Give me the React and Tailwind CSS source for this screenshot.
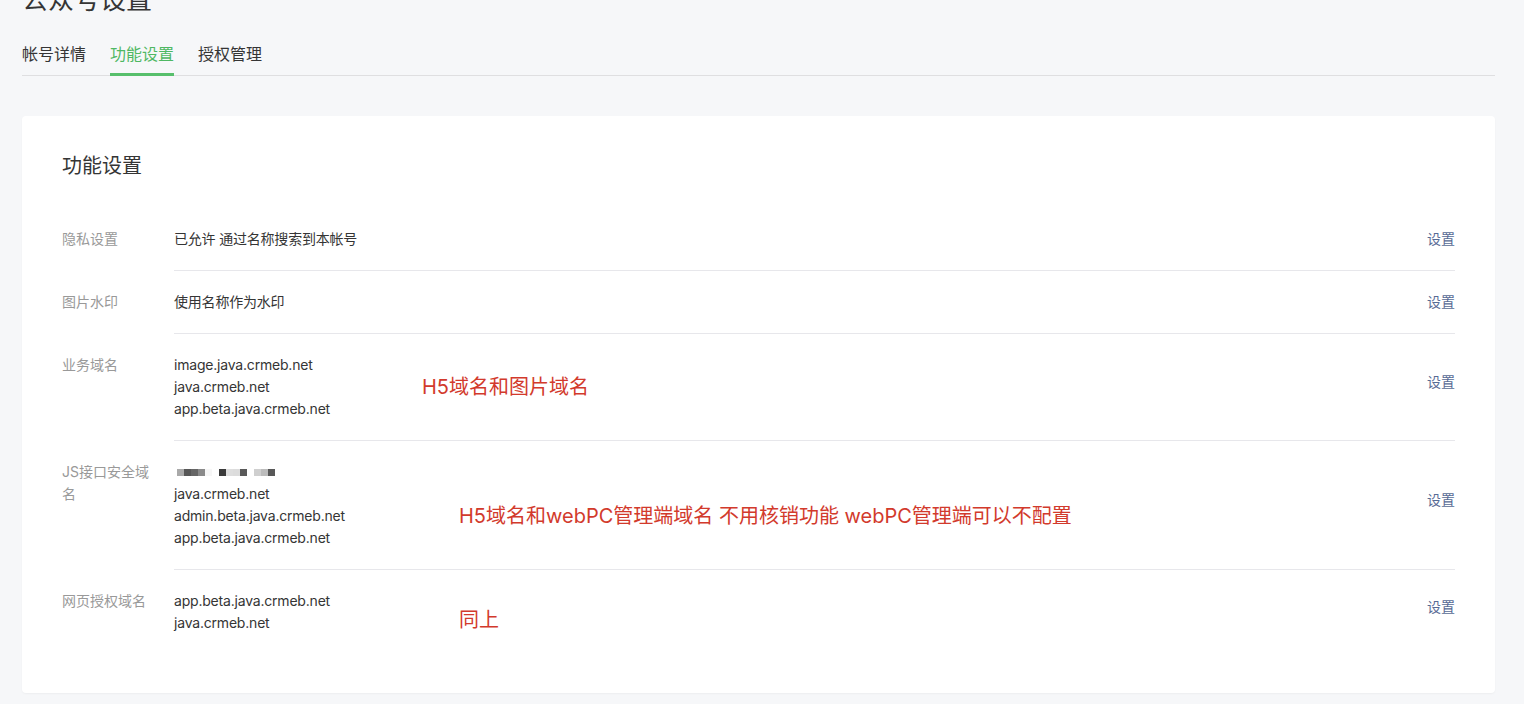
import React from "react";

const FONT = { fontFamily: '"Inter", "Noto Sans CJK SC", sans-serif' };

const rows = [
  { label: "隐私设置", lines: ["已允许 通过名称搜索到本帐号"] },
  { label: "图片水印", lines: ["使用名称作为水印"] },
  {
    label: "业务域名",
    lines: ["image.java.crmeb.net", "java.crmeb.net", "app.beta.java.crmeb.net"],
    note: "H5域名和图片域名",
    noteClass: "left-[248px] top-[41px]",
  },
  {
    label: "JS接口安全域名",
    blurred: true,
    lines: ["java.crmeb.net", "admin.beta.java.crmeb.net", "app.beta.java.crmeb.net"],
    note: "H5域名和webPC管理端域名 不用核销功能 webPC管理端可以不配置",
    noteClass: "left-[285px] top-[63px]",
  },
  {
    label: "网页授权域名",
    lines: ["app.beta.java.crmeb.net", "java.crmeb.net"],
    note: "同上",
    noteClass: "left-[285px] top-[38px]",
  },
];

// mosaic blocks of the hidden domain
const mosaic = [
  ["bg-[#a9a9a9]", "bg-[#575757]", "bg-[#666666]", "bg-[#8a8a8a]", "bg-[#f6f6f6]"],
  ["bg-[#3a3a3a]", "bg-[#dedede]", "bg-[#dcdcdc]", "bg-[#595959]"],
  ["bg-[#cfcfcf]", "bg-[#bcbcbc]", "bg-[#585858]"],
];

function Mosaic() {
  return (
    <div className="flex h-[22px] items-center gap-[7px] pl-[3px]">
      {mosaic.map((grp, i) => (
        <div key={i} className="flex">
          {grp.map((c, j) => (
            <div key={j} className={`h-[7px] w-[7px] ${c}`} />
          ))}
        </div>
      ))}
    </div>
  );
}

function Row({ row, last }) {
  const multi = row.lines.length > 1;
  return (
    <div className="flex">
      <div className="w-[112px] shrink-0 py-5 pr-[24px] text-[14px] leading-[22px] text-[#999999]">
        {row.label}
      </div>
      <div
        className={`relative flex flex-1 items-center justify-between py-5 ${
          last ? "" : "border-b border-[#e7e7eb]"
        }`}
      >
        <div className="text-[14px] leading-[22px] tracking-[-0.2px] text-[#353535]">
          {row.blurred && <Mosaic />}
          {row.lines.map((l) => (
            <div key={l}>{l}</div>
          ))}
        </div>
        {row.note && (
          <div
            className={`absolute text-[20px] font-normal leading-[24px] text-[#d23a2c] ${row.noteClass}`}
          >
            {row.note}
          </div>
        )}
        <a
          className={`text-[14px] leading-[22px] text-[#576b95] ${
            multi ? "-translate-y-[5px]" : ""
          }`}
        >
          设置
        </a>
      </div>
    </div>
  );
}

export default function App() {
  return (
    <div className="min-h-screen overflow-hidden bg-[#f6f7f9] pl-[22px] pr-[29px]" style={FONT}>
      <h1 className="-mt-[17px] text-[26px] font-normal leading-[34px] text-[#353535]">公众号设置</h1>

      <div className="mt-[25px] flex gap-[24px] border-b border-[#dfdfe1]">
        <div className="pb-[9px] text-[16px] leading-[24px] text-[#353535]">帐号详情</div>
        <div className="-mb-px border-b-[3px] border-[#57bf6c] pb-[7px] text-[16px] leading-[24px] text-[#4fb863]">
          功能设置
        </div>
        <div className="pb-[9px] text-[16px] leading-[24px] text-[#353535]">授权管理</div>
      </div>

      <div className="mt-[40px] rounded-[4px] bg-white px-[40px] pb-[39px] pt-[36px] shadow-[0_1px_2px_rgba(0,0,0,0.04)]">
        <h2 className="text-[20px] font-normal leading-[28px] text-[#353535]">功能设置</h2>
        <div className="mt-[28px]">
          {rows.map((r, i) => (
            <Row key={r.label} row={r} last={i === rows.length - 1} />
          ))}
        </div>
      </div>
    </div>
  );
}
